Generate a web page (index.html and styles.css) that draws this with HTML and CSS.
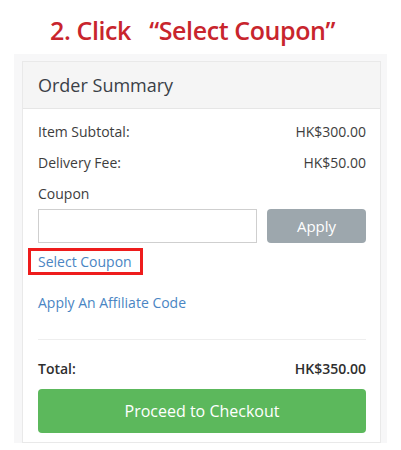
FILE: index.html
```html
<!DOCTYPE html>
<html>
<head>
<meta charset="utf-8">
<link rel="stylesheet" href="styles.css">
</head>
<body>
<h1 class="step">2. Click&nbsp;&nbsp;&nbsp;“Select Coupon”</h1>
<div class="wrap">
  <div class="card">
    <div class="card-head">Order Summary</div>
    <div class="card-body">
      <div class="row"><span>Item Subtotal:</span><span>HK$300.00</span></div>
      <div class="row"><span>Delivery Fee:</span><span>HK$50.00</span></div>
      <div class="label">Coupon</div>
      <div class="coupon">
        <input class="coupon-input" type="text">
        <button class="apply">Apply</button>
      </div>
      <div class="select-line"><a class="link select">Select Coupon</a></div>
      <div class="affiliate"><a class="link">Apply An Affiliate Code</a></div>
      <hr class="divider">
      <div class="row total"><span>Total:</span><span>HK$350.00</span></div>
      <button class="checkout">Proceed to Checkout</button>
    </div>
  </div>
</div>
</body>
</html>
```

FILE: styles.css
```css
*, *::before, *::after { box-sizing: border-box; }
body {
  margin: 0;
  background: #fff;
  font-family: "Open Sans", "Noto Sans", sans-serif;
  color: #333;
  width: 401px;
  height: 450px;
  overflow: hidden;
}
.step {
  margin: 0;
  padding: 14px 0 0 50px;
  height: 54px;
  font-size: 25px;
  line-height: 32px;
  font-weight: 600;
  color: #c8252d;
  letter-spacing: -0.4px;
  white-space: nowrap;
}
.wrap {
  margin-left: 14px;
  width: 373px;
  background: #f7f7f8;
  padding: 7px 6px 0 8px;
  height: 389px;
}
.card {
  background: #fff;
  border: 1px solid #e9e9e9;
  height: 100%;
}
.card-head {
  height: 47px;
  background: #f5f5f5;
  border-bottom: 1px solid #e6e6e6;
  padding: 0 15px;
  font-size: 18px;
  line-height: 46px;
  color: #3a3f47;
}
.card-body {
  padding: 13px 14px 0 15px;
  font-size: 14px;
  line-height: 20px;
}
.row {
  display: flex;
  justify-content: space-between;
  margin-bottom: 11px;
  color: #3d3d3d;
}
.label {
  color: #3d3d3d;
  margin-bottom: 5px;
}
.coupon {
  display: flex;
  gap: 10px;
  height: 34px;
}
.coupon-input {
  width: 219px;
  height: 34px;
  border: 1px solid #cfcfcf;
  margin: 0;
  padding: 0 8px;
}
.apply {
  flex: 1;
  height: 34px;
  border: 0;
  border-radius: 4px;
  background: #9da7ad;
  color: #fff;
  font-family: inherit;
  font-size: 15px;
}
.select-line {
  margin-top: 9px;
  position: relative;
}
.link {
  color: #4a85c3;
}
.select::after {
  content: "";
  position: absolute;
  left: -10px;
  top: -4px;
  width: 115px;
  height: 27px;
  border: 3px solid #ee1c1c;
}
.affiliate {
  margin-top: 21px;
}
.divider {
  margin: 26px 0 19px;
  border: 0;
  border-top: 1px solid #eeeeee;
}
.total {
  font-weight: 600;
  color: #2e2e2e;
  margin-bottom: 10px;
}
.checkout {
  display: block;
  width: 100%;
  height: 44px;
  border: 0;
  border-radius: 4px;
  background: #5cb85c;
  color: #fff;
  font-family: inherit;
  font-size: 16px;
}
```
